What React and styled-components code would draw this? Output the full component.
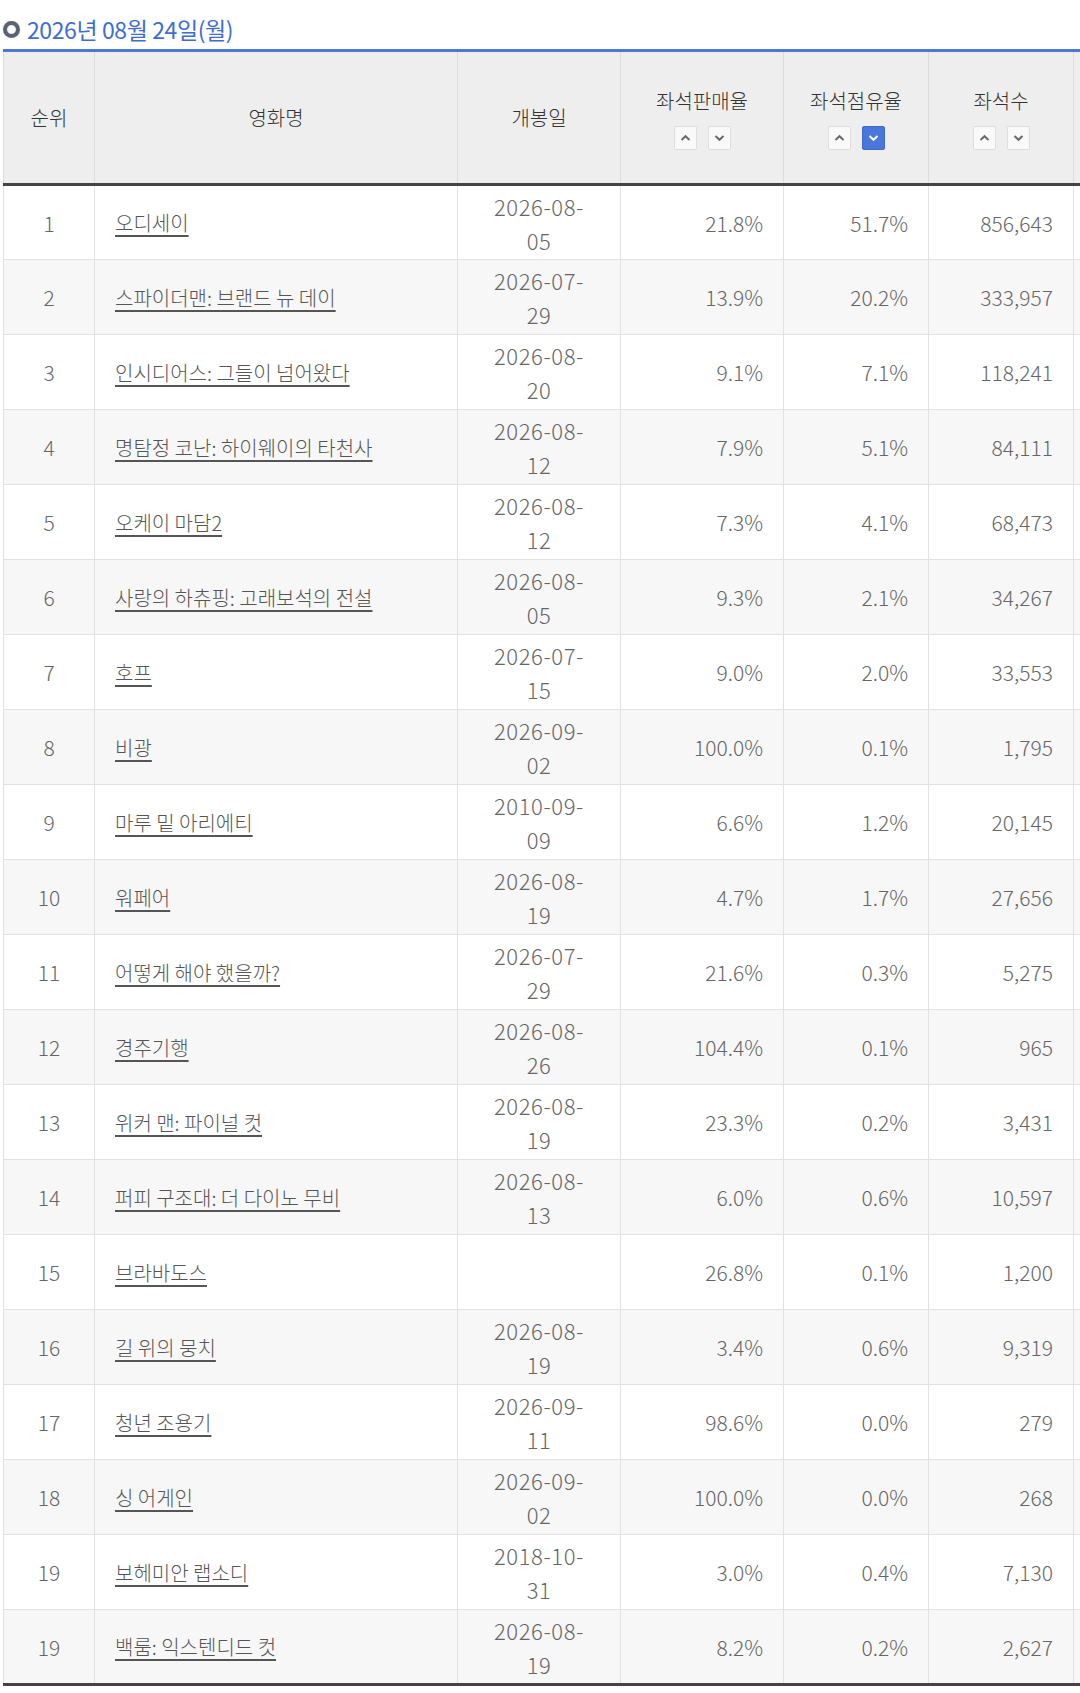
import React from 'react';
import styled, { createGlobalStyle } from 'styled-components';

const rows = [
  [1, '오디세이', '2026-08-05', '21.8%', '51.7%', '856,643'],
  [2, '스파이더맨: 브랜드 뉴 데이', '2026-07-29', '13.9%', '20.2%', '333,957'],
  [3, '인시디어스: 그들이 넘어왔다', '2026-08-20', '9.1%', '7.1%', '118,241'],
  [4, '명탐정 코난: 하이웨이의 타천사', '2026-08-12', '7.9%', '5.1%', '84,111'],
  [5, '오케이 마담2', '2026-08-12', '7.3%', '4.1%', '68,473'],
  [6, '사랑의 하츄핑: 고래보석의 전설', '2026-08-05', '9.3%', '2.1%', '34,267'],
  [7, '호프', '2026-07-15', '9.0%', '2.0%', '33,553'],
  [8, '비광', '2026-09-02', '100.0%', '0.1%', '1,795'],
  [9, '마루 밑 아리에티', '2010-09-09', '6.6%', '1.2%', '20,145'],
  [10, '워페어', '2026-08-19', '4.7%', '1.7%', '27,656'],
  [11, '어떻게 해야 했을까?', '2026-07-29', '21.6%', '0.3%', '5,275'],
  [12, '경주기행', '2026-08-26', '104.4%', '0.1%', '965'],
  [13, '위커 맨: 파이널 컷', '2026-08-19', '23.3%', '0.2%', '3,431'],
  [14, '퍼피 구조대: 더 다이노 무비', '2026-08-13', '6.0%', '0.6%', '10,597'],
  [15, '브라바도스', '', '26.8%', '0.1%', '1,200'],
  [16, '길 위의 뭉치', '2026-08-19', '3.4%', '0.6%', '9,319'],
  [17, '청년 조용기', '2026-09-11', '98.6%', '0.0%', '279'],
  [18, '싱 어게인', '2026-09-02', '100.0%', '0.0%', '268'],
  [19, '보헤미안 랩소디', '2018-10-31', '3.0%', '0.4%', '7,130'],
  [19, '백룸: 익스텐디드 컷', '2026-08-19', '8.2%', '0.2%', '2,627'],
];

const Chevron = ({ up }) => (
  <svg width="11" height="8" viewBox="0 0 11 8">
    <path
      d={up ? 'M1.5 6 L5.5 2.2 L9.5 6' : 'M1.5 2 L5.5 5.8 L9.5 2'}
      fill="none"
      stroke="currentColor"
      strokeWidth="2"
    />
  </svg>
);

const SortHead = ({ label, active }) => (
  <HeadStack>
    <span>{label}</span>
    <SortButtons>
      <SortButton $active={active === 'up'}>
        <Chevron up />
      </SortButton>
      <SortButton $active={active === 'down'}>
        <Chevron />
      </SortButton>
    </SortButtons>
  </HeadStack>
);

const splitDate = d => {
  if (!d) return null;
  const i = d.lastIndexOf('-');
  return (
    <>
      {d.slice(0, i + 1)}
      <br />
      {d.slice(i + 1)}
    </>
  );
};

const App = () => (
  <Page>
    <GlobalStyle />
    <TitleRow>
      <Bullet />
      <TitleText>2026년 08월 24일(월)</TitleText>
    </TitleRow>
    <Table>
      <colgroup>
        <col style={{ width: 91 }} />
        <col style={{ width: 363 }} />
        <col style={{ width: 163 }} />
        <col style={{ width: 163 }} />
        <col style={{ width: 145 }} />
        <col style={{ width: 145 }} />
        <col style={{ width: 145 }} />
      </colgroup>
      <thead>
        <tr>
          <Th>순위</Th>
          <Th>영화명</Th>
          <Th>개봉일</Th>
          <Th>
            <SortHead label="좌석판매율" />
          </Th>
          <Th>
            <SortHead label="좌석점유율" active="down" />
          </Th>
          <Th>
            <SortHead label="좌석수" />
          </Th>
          <Th />
        </tr>
      </thead>
      <tbody>
        {rows.map(([rank, title, date, sales, share, seats], i) => (
          <Row key={i}>
            <Td $align="center">{rank}</Td>
            <Td $align="left">
              <TitleLink href="#">{title}</TitleLink>
            </Td>
            <DateCell>{splitDate(date)}</DateCell>
            <Td $align="right">{sales}</Td>
            <Td $align="right">{share}</Td>
            <Td $align="right">{seats}</Td>
            <Td $align="right" />
          </Row>
        ))}
      </tbody>
    </Table>
  </Page>
);

const GlobalStyle = createGlobalStyle`
  html, body {
    margin: 0;
    padding: 0;
    background: #fff;
    overflow-x: hidden;
  }
  body {
    font-family: "Noto Sans CJK KR", "Noto Sans", sans-serif;
    font-weight: 300;
  }
`;

const Page = styled.div`
  width: 1080px;
  padding-left: 3px;
  box-sizing: border-box;
  overflow: hidden;
`;

const TitleRow = styled.div`
  display: flex;
  align-items: center;
  gap: 7px;
  height: 30px;
  padding-top: 14px;
  margin-bottom: 5px;
`;

const Bullet = styled.span`
  width: 17px;
  height: 17px;
  border-radius: 50%;
  box-sizing: border-box;
  border: 4px solid #5b6170;
  background: radial-gradient(circle, #fff 40%, #d8dbe2 100%);
  box-shadow: 0 0 1px #9aa0ad;
`;

const TitleText = styled.span`
  color: #3d6dd2;
  font-size: 23px;
  font-weight: 400;
  line-height: 30px;
  letter-spacing: -0.4px;
`;

const Table = styled.table`
  border-collapse: collapse;
  table-layout: fixed;
  width: 1215px;
  border-top: 3px solid #4d78d6;
  border-bottom: 3px solid #444;
`;

const Th = styled.th`
  height: 131px;
  padding: 0;
  background: #eeeeee;
  color: #333;
  font-size: 20px;
  font-weight: 300;
  text-align: center;
  vertical-align: middle;
  border-left: 1px solid #dcdcdc;
  border-right: 1px solid #dcdcdc;
  border-bottom: 3px solid #444;
`;

const HeadStack = styled.div`
  display: flex;
  flex-direction: column;
  align-items: center;
  gap: 10px;
  line-height: 30px;
`;

const SortButtons = styled.div`
  display: flex;
  gap: 11px;
`;

const SortButton = styled.span`
  display: flex;
  align-items: center;
  justify-content: center;
  width: 23px;
  height: 24px;
  box-sizing: border-box;
  border-radius: 2px;
  border: 1px solid ${p => (p.$active ? '#3f68c8' : '#dedede')};
  background: ${p => (p.$active ? '#4a78da' : '#f9f9f9')};
  color: ${p => (p.$active ? '#fff' : '#6a6a6a')};
`;

const Row = styled.tr`
  height: 75px;
  background: #fff;
  &:nth-child(even) {
    background: #f7f7f7;
  }
`;

const Td = styled.td`
  padding: 0 20px;
  border: 1px solid #e2e2e2;
  border-top: none;
  color: #666;
  font-size: 21px;
  line-height: 34px;
  text-align: ${p => p.$align};
  vertical-align: middle;
  white-space: nowrap;
`;

const DateCell = styled(Td)`
  padding: 0;
  text-align: center;
  font-size: 22px;
  letter-spacing: 0.6px;
`;

const TitleLink = styled.a`
  color: #555;
  font-size: 20px;
  text-decoration: underline;
  text-underline-offset: 4px;
`;

export default App;
